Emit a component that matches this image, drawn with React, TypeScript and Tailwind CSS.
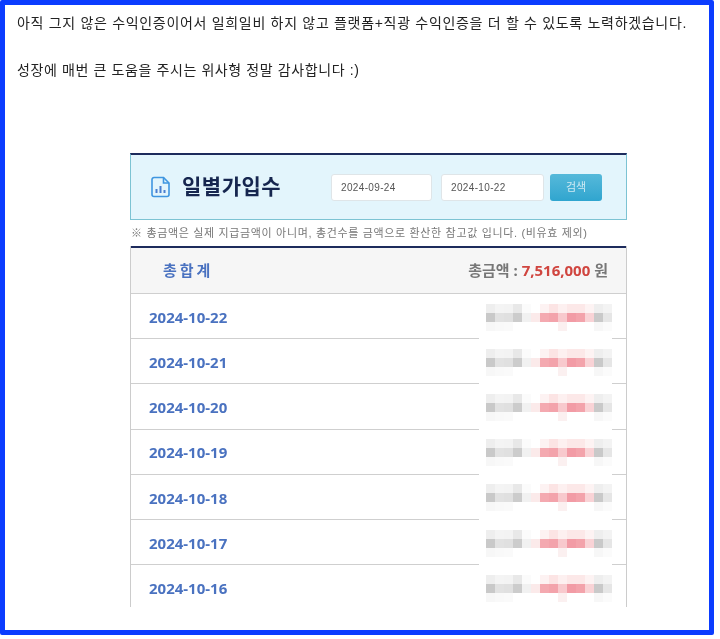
const font = { fontFamily: '"Liberation Sans", "Noto Sans CJK KR", sans-serif' };
const numberFont = { fontFamily: '"Noto Sans", "Noto Sans CJK KR", sans-serif' };

const dates = ["2024-10-22", "2024-10-21", "2024-10-20", "2024-10-19", "2024-10-18", "2024-10-17", "2024-10-16"];

// mosaic that hides the amounts, 14 cells by 3 rows
const mosaic = [
  ["#eeeeee", "#f4f4f4", "#f3f3f3", "#e8e8e8", "#fbfbfb", "#ffffff", "#fdf2f2", "#fce4e4", "#fdf0f0", "#fce8e8", "#fce8e8", "#fdf3f3", "#eeeeee", "#f3f3f3"],
  ["#c9c9c9", "#e2e2e2", "#e0e0e0", "#cccccc", "#f1f1f1", "#fbeaea", "#f4a9b0", "#f3a3ab", "#f8c9cd", "#f29ba5", "#f3a3ab", "#f9d3d6", "#c9c9c9", "#e6e6e6"],
  ["#f7f7f7", "#f9f9f9", "#fafafa", "#ffffff", "#ffffff", "#ffffff", "#ffffff", "#ffffff", "#fbf0f0", "#ffffff", "#ffffff", "#ffffff", "#f7f7f7", "#fbfbfb"],
];

function Mosaic() {
  return (
    <div className="grid grid-cols-[repeat(14,9px)] auto-rows-[9px] blur-[0.6px]">
      {mosaic.flat().map((c, i) => (
        <div key={i} style={{ backgroundColor: c }} />
      ))}
    </div>
  );
}

function ChartFileIcon() {
  return (
    <svg width="20" height="22" viewBox="0 0 20 22" fill="none" stroke="#3f96e0" strokeWidth="1.6">
      <path d="M3 1.5h9.5l5.5 5.5v11.5a2 2 0 0 1-2 2H3a2 2 0 0 1-2-2v-15a2 2 0 0 1 2-2z" />
      <path d="M12.5 1.5v5.5H18" />
      <path d="M5.5 17v-4M9.5 17v-7M13.5 17v-3" strokeWidth="2" stroke="#4a7fd0" />
    </svg>
  );
}

function DateBox({ value, width }: { value: string; width: string }) {
  return (
    <div className={`flex h-[27px] items-center rounded-[3px] border border-[#dfe5e8] bg-white pl-[9px] text-[10px] tracking-[0.35px] text-[#555555] ${width}`}>
      {value}
    </div>
  );
}

export default function App() {
  return (
    <div className="h-[639px] w-[720px] bg-white" style={font}>
      <div className="h-[635px] w-[714px] rounded-[2px] border-[5px] border-[#0b3cff] bg-white">
        <div className="pl-3 pt-[8px] text-sm leading-[20px] text-[#222222] blur-[0.3px]">
          <p className="whitespace-nowrap tracking-[0.69px]">아직 그지 않은 수익인증이어서 일희일비 하지 않고 플랫폼+직광 수익인증을 더 할 수 있도록 노력하겠습니다.</p>
          <p className="mt-[27px] whitespace-nowrap tracking-[0.61px]">성장에 매번 큰 도움을 주시는 위사형 정말 감사합니다 :)</p>
        </div>

        <section className="ml-[125px] mt-[73px] w-[497px] blur-[0.3px]">
          <div className="flex h-[67px] items-center border-x border-b border-[#7cc3d3] border-t-2 border-t-[#1d2b5c] bg-[#e3f5fc] pl-5">
            <ChartFileIcon />
            <h1 className="ml-[11px] w-[149px] text-[21px] font-bold tracking-[0.5px] text-[#16264f]">일별가입수</h1>
            <DateBox value="2024-09-24" width="w-[101px]" />
            <div className="ml-[9px]">
              <DateBox value="2024-10-22" width="w-[103px]" />
            </div>
            <button className="ml-[6px] h-[27px] w-[52px] rounded-[3px] bg-linear-to-b from-[#55b9da] to-[#2fa5cf] text-[11px] text-[#cfeaf3]">검색</button>
          </div>

          <p className="h-[26px] whitespace-nowrap pl-[1px] pt-[5px] text-[11px] leading-[16px] tracking-[0.66px] text-[#777777]">
            ※ 총금액은 실제 지급금액이 아니며, 총건수를 금액으로 환산한 참고값 입니다. (비유효 제외)
          </p>

          <div className="h-[361px] overflow-hidden border-x border-[#cccccc] border-t-0">
            <div className="-mx-px h-[2px] bg-[#1d2b5c]" />
            <div className="flex h-[46px] items-center justify-between border-b border-[#cfcfcf] bg-[#f6f6f6] pl-8 pr-[18px]" style={numberFont}>
              <span className="text-[15px] font-bold tracking-[3px] text-[#4a72c0]">총합계</span>
              <span className="text-[15px] font-bold text-[#777777]">
                총금액 : <span className="text-[#d0453f]">7,516,000</span> 원
              </span>
            </div>
            {dates.map((d) => (
              <div key={d} className="relative flex h-[45.2px] items-center justify-between border-b border-[#cfcfcf] pl-[18px] pr-[14px] pt-[2px]">
                <span className="text-[15px] font-bold text-[#4a72c0]" style={numberFont}>{d}</span>
                <Mosaic />
                <div className="absolute -bottom-px right-[14px] h-[3px] w-[133px] bg-white" />
              </div>
            ))}
          </div>
        </section>
      </div>
    </div>
  );
}
